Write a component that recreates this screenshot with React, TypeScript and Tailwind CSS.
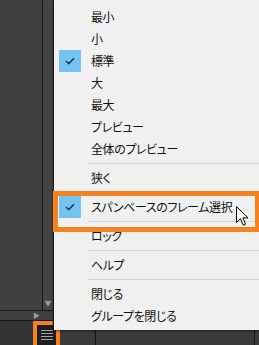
type Entry = { label?: string; checked?: boolean; sep?: boolean };

const entries: Entry[] = [
  { label: "最小" },
  { label: "小" },
  { label: "標準", checked: true },
  { label: "大" },
  { label: "最大" },
  { label: "プレビュー" },
  { label: "全体のプレビュー" },
  { sep: true },
  { label: "狭く" },
  { sep: true },
  { label: "スパンベースのフレーム選択", checked: true },
  { sep: true },
  { label: "ロック" },
  { sep: true },
  { label: "ヘルプ" },
  { sep: true },
  { label: "閉じる" },
  { label: "グループを閉じる" },
];

function Check() {
  return (
    <svg width="10" height="8" viewBox="0 0 10 8" fill="none">
      <path d="M1 4 L3.8 6.6 L9 1.2" stroke="#1d3a5a" strokeWidth="1.6" />
    </svg>
  );
}

function MenuItem({ entry }: { entry: Entry }) {
  if (entry.sep) {
    return (
      <div className="h-[7px] flex items-center pl-[34px]">
        <div className="w-full border-t border-[#d6d6d6]" />
      </div>
    );
  }
  return (
    <div className="h-[22px] flex items-center">
      <div
        className={
          entry.checked
            ? "ml-[5px] w-[22px] h-[22px] flex items-center justify-center bg-[#74c4f2]"
            : "ml-[5px] w-[22px] h-[22px]"
        }
      >
        {entry.checked && <Check />}
      </div>
      <span className="ml-[10px] text-[12px] leading-none tracking-[-0.4px] text-[#111]">
        {entry.label}
      </span>
    </div>
  );
}

export default function App() {
  return (
    <div
      className="relative w-[259px] h-[345px] overflow-hidden bg-[#3a3a3a] flex flex-col"
      style={{ fontFamily: '"Noto Sans CJK JP", "Noto Sans", sans-serif', fontFeatureSettings: '"palt"' }}
    >
      {/* background panels */}
      <div className="flex-1 flex">
        <div className="w-[54px] flex flex-col">
          <div className="flex-1 flex">
            <div className="w-[42px] bg-[#404040]" />
            <div className="w-px bg-[#161616]" />
            <div className="w-[10px] bg-[#454545] flex flex-col justify-end items-center pb-[3px]">
              <span className="text-[7px] leading-none text-[#9a9a9a]">▼</span>
            </div>
            <div className="w-px bg-[#161616]" />
          </div>
          <div className="h-px bg-[#1a1a1a]" />
          <div className="h-[9px] bg-[#3e3e3e] flex items-center pl-[33px]">
            <span className="text-[7px] leading-none text-[#9a9a9a]">▶</span>
          </div>
          <div className="h-px bg-[#1a1a1a]" />
        </div>
        <div className="flex-1 bg-[#3c3c3c]" />
      </div>
      <div className="h-[24px] flex bg-[#333333]">
        <div className="w-[33px]" />
        <div className="w-[27px] border-[4px] border-b-0 border-[#f5821f] bg-[#1f1f1f] flex flex-col items-center justify-center gap-[2px]">
          <div className="w-[12px] h-px bg-[#a0a0a0]" />
          <div className="w-[12px] h-px bg-[#a0a0a0]" />
          <div className="w-[12px] h-px bg-[#a0a0a0]" />
          <div className="w-[12px] h-px bg-[#a0a0a0]" />
        </div>
        <div className="w-[35px] bg-[#3a3a3a]" />
        <div className="w-px bg-[#151515]" />
        <div className="flex-1 bg-[#3a3a3a]" />
        <div className="w-px bg-[#151515]" />
        <div className="w-[4px] bg-[#3a3a3a]" />
      </div>

      {/* popup menu */}
      <div className="absolute left-[53px] top-0 right-0 h-[330px] bg-[#f0f0f0] border-l border-[#1a1a1a] pt-[6px] shadow-[0_1px_2px_rgba(0,0,0,0.5)]">
        {entries.map((e, i) => (
          <MenuItem key={i} entry={e} />
        ))}
      </div>

      {/* highlight frame */}
      <div className="absolute left-[53px] top-[191px] right-0 h-[41px] border-[5px] border-r-[4px] border-[#f5821f]" />

      {/* mouse cursor */}
      <svg className="absolute left-[236px] top-[206px]" width="13" height="21" viewBox="0 0 13 21">
        <path
          d="M0.5 0.5 L0.5 16.5 L4.5 12.7 L7.3 19.2 L9.6 18.2 L6.9 11.9 L12 11.9 Z"
          fill="#fff"
          stroke="#000"
          strokeWidth="1"
        />
      </svg>
    </div>
  );
}
